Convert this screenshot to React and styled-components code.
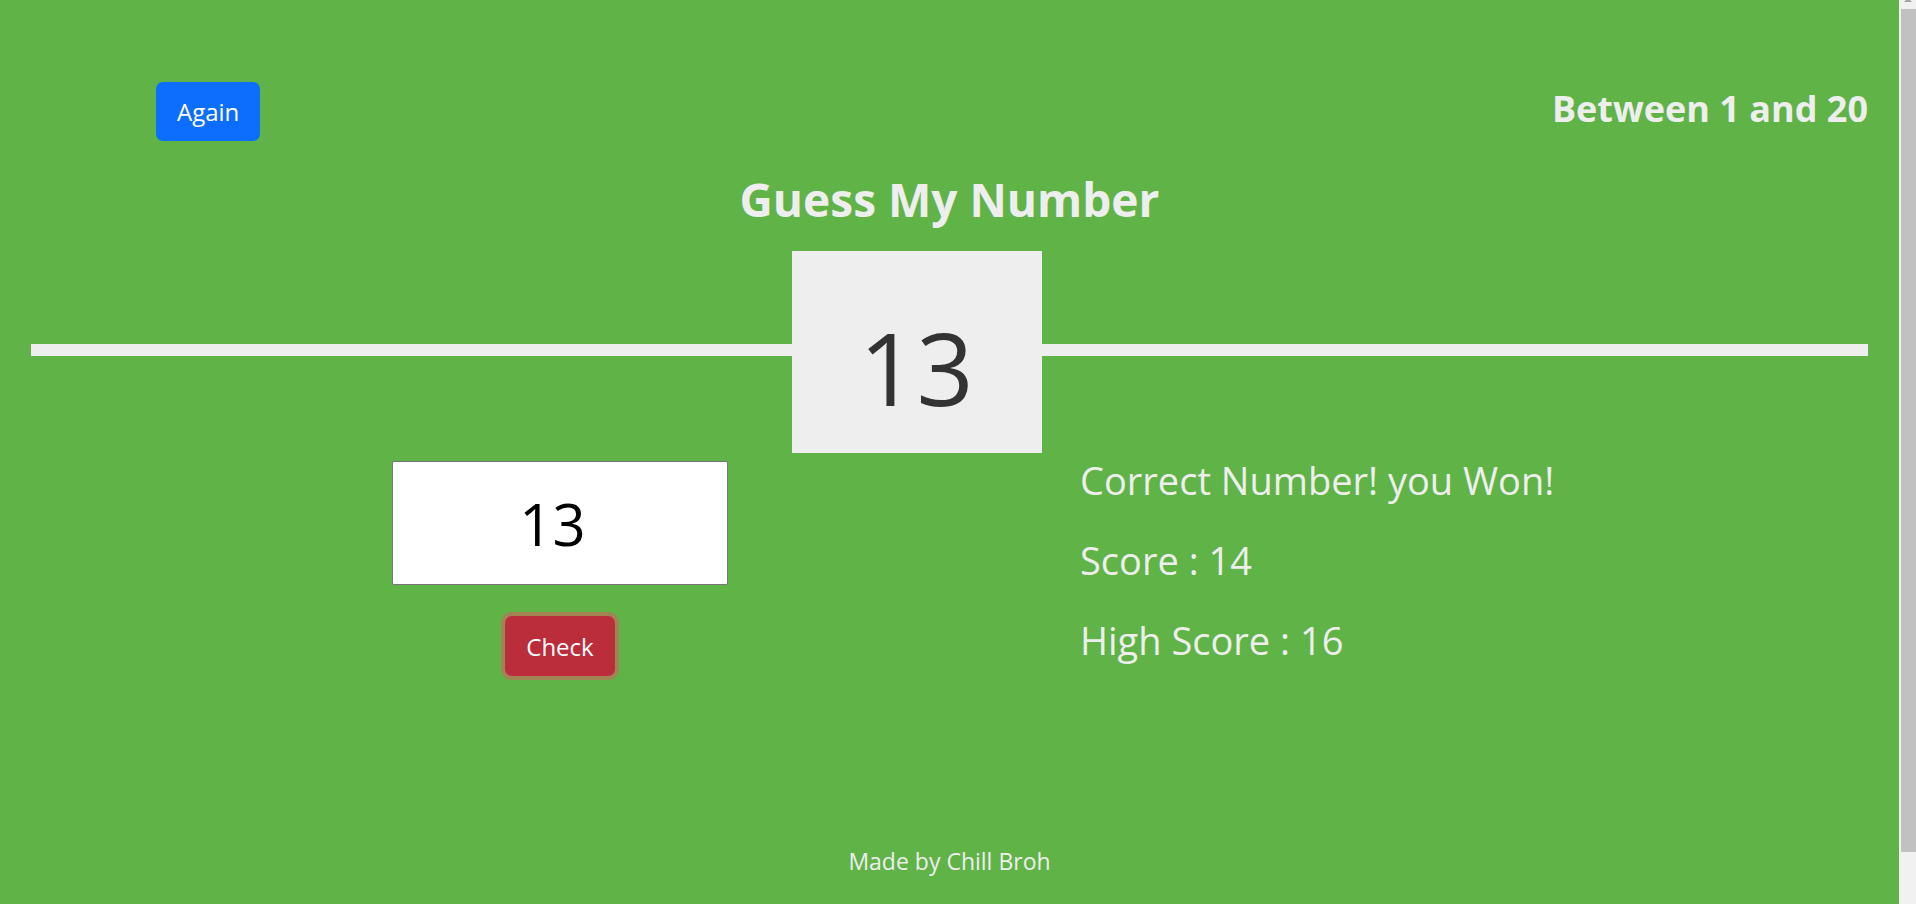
import React, { useState } from "react";
import styled, { createGlobalStyle } from "styled-components";

const GlobalStyle = createGlobalStyle`
  body {
    margin: 0;
    background-color: #60b347;
    font-family: "Open Sans", "Noto Sans", sans-serif;
    color: #eee;
  }
  * {
    box-sizing: border-box;
  }
`;

const Page = styled.div`
  margin-right: 17px;
  padding: 0 31px 40px;
`;

const Header = styled.header`
  position: relative;
  padding-bottom: 117px;
  border-bottom: 12px solid #eee;
`;

const TopRow = styled.div`
  display: flex;
  justify-content: space-between;
  align-items: flex-start;
  padding: 82px 0 0 125px;
`;

const Button = styled.button`
  border: none;
  border-radius: 7px;
  padding: 0 21px;
  height: ${(p) => p.$height || 59}px;
  font-family: inherit;
  font-size: 24px;
  color: #fff;
  background-color: ${(p) => p.$color};
  box-shadow: ${(p) => (p.$focused ? "0 0 0 4px rgba(225, 83, 97, 0.5)" : "none")};
  cursor: pointer;
`;

const Range = styled.h2`
  margin: 5px 0 0;
  font-size: 36px;
  font-weight: 700;
  line-height: 1.2;
`;

const Title = styled.h1`
  margin: 31px 0 0;
  text-align: center;
  font-size: 46px;
  font-weight: 700;
  line-height: 1.2;
`;

const SecretNumber = styled.div`
  position: absolute;
  left: calc(50% - 33px);
  bottom: -109px;
  transform: translateX(-50%);
  width: 250px;
  height: 202px;
  display: flex;
  align-items: center;
  justify-content: center;
  padding-top: 30px;
  background-color: #eee;
  color: #333;
  font-size: 100px;
  line-height: 1;
`;

const Main = styled.main`
  display: flex;
  align-items: flex-start;
  gap: 352px;
  margin-top: 102px;
  padding-left: 361px;
`;

const GuessColumn = styled.section`
  display: flex;
  flex-direction: column;
  align-items: center;
  gap: 31px;
  width: 336px;
  padding-top: 3px;
`;

const GuessInput = styled.input`
  width: 336px;
  height: 124px;
  border: 1px solid #767676;
  border-radius: 2px;
  background: #fff;
  color: #000;
  font-family: inherit;
  font-size: 58px;
  text-align: center;
`;

const Stats = styled.section`
  display: flex;
  flex-direction: column;
  gap: 36px;
`;

const StatLine = styled.p`
  margin: 0;
  font-size: 38px;
  line-height: 44px;
`;

const Footer = styled.footer`
  margin-top: 172px;
  text-align: center;
  font-size: 23px;
  line-height: 1.2;
`;

const ScrollTrack = styled.div`
  position: fixed;
  top: 0;
  right: 0;
  bottom: 0;
  width: 17px;
  background-color: #f1f1f1;
`;

const ScrollArrow = styled.div`
  position: absolute;
  top: -2px;
  left: 5px;
  border-left: 4px solid transparent;
  border-right: 4px solid transparent;
  border-bottom: 4px solid #a3a3a3;
`;

const ScrollThumb = styled.div`
  position: absolute;
  top: 9px;
  bottom: 52px;
  left: 2px;
  right: 0;
  background-color: #c1c1c1;
`;

const App = () => {
  const [guess, setGuess] = useState("13");

  return (
    <>
      <GlobalStyle />
      <Page>
        <Header>
          <TopRow>
            <Button $color="#0d6efd">Again</Button>
            <Range>Between 1 and 20</Range>
          </TopRow>
          <Title>Guess My Number</Title>
          <SecretNumber>13</SecretNumber>
        </Header>
        <Main>
          <GuessColumn>
            <GuessInput
              type="number"
              value={guess}
              onChange={(e) => setGuess(e.target.value)}
            />
            <Button $color="#bb2d3b" $height={60} $focused>
              Check
            </Button>
          </GuessColumn>
          <Stats>
            <StatLine>Correct Number! you Won!</StatLine>
            <StatLine>Score : 14</StatLine>
            <StatLine>High Score : 16</StatLine>
          </Stats>
        </Main>
        <Footer>Made by Chill Broh</Footer>
      </Page>
      <ScrollTrack>
        <ScrollArrow />
        <ScrollThumb />
      </ScrollTrack>
    </>
  );
};

export default App;
